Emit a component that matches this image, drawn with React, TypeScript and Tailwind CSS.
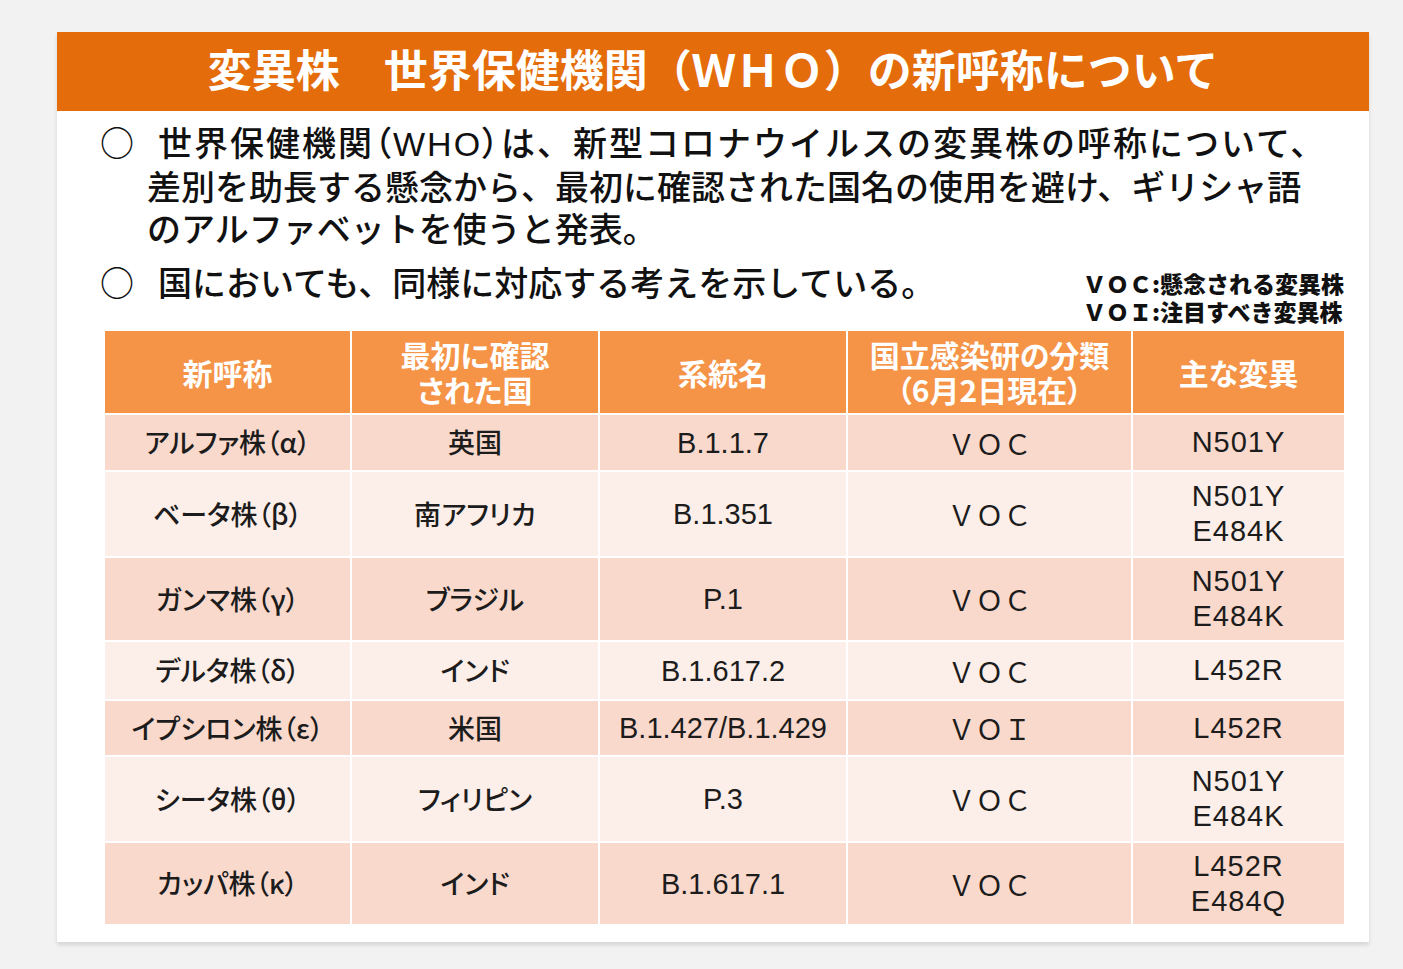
import React from "react";

type Row = {
  name: string;
  country: string;
  lineage: string;
  cls: string;
  mutations: string[];
  h: string;
};

const rows: Row[] = [
  { name: "アルファ株（α）", country: "英国", lineage: "B.1.1.7", cls: "ＶＯＣ", mutations: ["N501Y"], h: "h-[55px]" },
  { name: "ベータ株（β）", country: "南アフリカ", lineage: "B.1.351", cls: "ＶＯＣ", mutations: ["N501Y", "E484K"], h: "h-[84px]" },
  { name: "ガンマ株（γ）", country: "ブラジル", lineage: "P.1", cls: "ＶＯＣ", mutations: ["N501Y", "E484K"], h: "h-[82px]" },
  { name: "デルタ株（δ）", country: "インド", lineage: "B.1.617.2", cls: "ＶＯＣ", mutations: ["L452R"], h: "h-[57px]" },
  { name: "イプシロン株（ε）", country: "米国", lineage: "B.1.427/B.1.429", cls: "ＶＯＩ", mutations: ["L452R"], h: "h-[54px]" },
  { name: "シータ株（θ）", country: "フィリピン", lineage: "P.3", cls: "ＶＯＣ", mutations: ["N501Y", "E484K"], h: "h-[84px]" },
  { name: "カッパ株（κ）", country: "インド", lineage: "B.1.617.1", cls: "ＶＯＣ", mutations: ["L452R", "E484Q"], h: "h-[81px]" },
];

const jp = "font-['Noto_Sans_CJK_JP',sans-serif]";
const latin = "font-['Liberation_Sans','Noto_Sans_CJK_JP',sans-serif]";

const cols = "grid grid-cols-[245px_246px_246px_283px_211px] gap-x-[2px]";

const App = () => {
  return (
    <div className={`min-h-screen bg-[#f2f2f2] pt-[32px] pl-[57px] ${jp}`}>
      <div className="w-[1312px] bg-white shadow-[0_3px_4px_rgba(0,0,0,0.12)]">
        {/* Title bar */}
        <div className="h-[79px] bg-[#e46c0a] flex items-center justify-center pb-[8px]">
          <h1 className="text-white font-bold text-[44px] leading-none">
            変異株　世界保健機関（ＷＨＯ）の新呼称について
          </h1>
        </div>

        <div className="pl-[43px] pr-[25px] pt-[10px] pb-[18px]">
          {/* Bullet 1 */}
          <div className="flex text-[34px] leading-[42px] font-medium text-[#111]">
            <span className="w-[47px] shrink-0">○</span>
            <p className="indent-[11px]">
              <span className="tracking-[2px]">
                世界保健機関<span className="[font-feature-settings:'palt']">（</span>
                <span className={latin}>WHO</span>
                <span className="[font-feature-settings:'palt']">）</span>は、新型コロナウイルスの変異株の呼称について、
              </span>
              <br />
              差別を助長する懸念から、最初に確認された国名の使用を避け、ギリシャ語
              <br />
              のアルファベットを使うと発表。
            </p>
          </div>

          {/* Bullet 2 + legend */}
          <div className="flex items-start justify-between mt-[12px]">
            <div className="flex text-[34px] leading-[42px] font-medium text-[#111]">
              <span className="w-[47px] shrink-0">○</span>
              <p className="indent-[11px]">国においても、同様に対応する考えを示している。</p>
            </div>
            <div className="mt-[8px] text-[23px] leading-[28px] font-black text-[#111]">
              <div>ＶＯＣ:懸念される変異株</div>
              <div>ＶＯＩ:注目すべき変異株</div>
            </div>
          </div>

          {/* Table */}
          <div className="ml-[5px] mt-[6px] w-[1239px] flex flex-col gap-y-[2px] [font-feature-settings:'palt']">
            <div className={`${cols} h-[82px]`}>
              {["新呼称", "最初に確認\nされた国", "系統名", "国立感染研の分類\n（6月2日現在）", "主な変異"].map((t) => (
                <div
                  key={t}
                  className="bg-[#f59347] text-white font-bold text-[30px] leading-[35px] flex items-center justify-center text-center whitespace-pre-line"
                >
                  {t}
                </div>
              ))}
            </div>
            {rows.map((r, i) => {
              const bg = i % 2 === 0 ? "bg-[#fad9cd]" : "bg-[#fcefe9]";
              const cell = `${bg} flex items-center justify-center text-center text-[#1c1c1c]`;
              return (
                <div key={r.name} className={`${cols} ${r.h}`}>
                  <div className={`${cell} text-[27px] font-medium`}>{r.name}</div>
                  <div className={`${cell} text-[27px] font-medium`}>{r.country}</div>
                  <div className={`${cell} ${latin} text-[29px] pt-[2px]`}>{r.lineage}</div>
                  <div className={`${cell} text-[28px] [font-feature-settings:normal]`}>{r.cls}</div>
                  <div className={`${cell} ${latin} flex-col text-[29px] leading-[35px] tracking-[1px]`}>
                    {r.mutations.map((m) => (
                      <span key={m}>{m}</span>
                    ))}
                  </div>
                </div>
              );
            })}
          </div>
        </div>
      </div>
    </div>
  );
};

export default App;
